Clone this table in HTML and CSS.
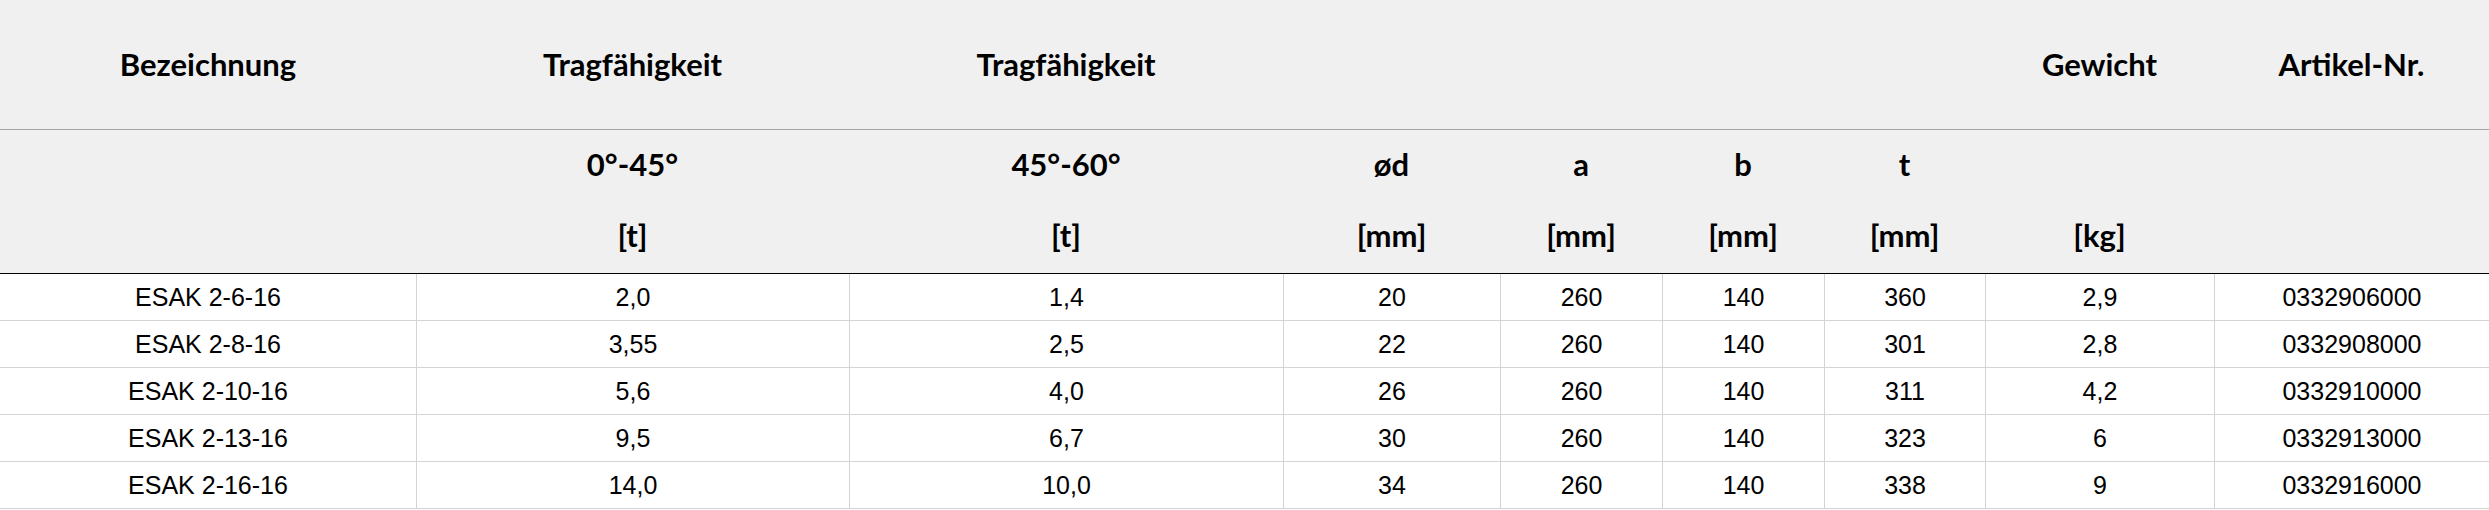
FILE: index.html
```html
<!DOCTYPE html>
<html lang="de">
<head>
<meta charset="utf-8">
<title>ESAK Spezifikation</title>
<link rel="stylesheet" href="styles.css">
</head>
<body>
<table class="spec">
  <colgroup>
    <col class="c1"><col class="c2"><col class="c3"><col class="c4"><col class="c5"><col class="c6"><col class="c7"><col class="c8"><col class="c9">
  </colgroup>
  <thead>
    <tr class="h1">
      <th>Bezeichnung</th>
      <th>Tragfähigkeit</th>
      <th>Tragfähigkeit</th>
      <th></th>
      <th></th>
      <th></th>
      <th></th>
      <th>Gewicht</th>
      <th>Artikel-Nr.</th>
    </tr>
    <tr class="h2">
      <th><span class="l1"></span><span class="l2"></span></th>
      <th><span class="l1">0°-45°</span><span class="l2">[t]</span></th>
      <th><span class="l1">45°-60°</span><span class="l2">[t]</span></th>
      <th><span class="l1">ød</span><span class="l2">[mm]</span></th>
      <th><span class="l1">a</span><span class="l2">[mm]</span></th>
      <th><span class="l1">b</span><span class="l2">[mm]</span></th>
      <th><span class="l1">t</span><span class="l2">[mm]</span></th>
      <th><span class="l1"></span><span class="l2">[kg]</span></th>
      <th><span class="l1"></span><span class="l2"></span></th>
    </tr>
  </thead>
  <tbody>
    <tr><td>ESAK 2-6-16</td><td>2,0</td><td>1,4</td><td>20</td><td>260</td><td>140</td><td>360</td><td>2,9</td><td>0332906000</td></tr>
    <tr><td>ESAK 2-8-16</td><td>3,55</td><td>2,5</td><td>22</td><td>260</td><td>140</td><td>301</td><td>2,8</td><td>0332908000</td></tr>
    <tr><td>ESAK 2-10-16</td><td>5,6</td><td>4,0</td><td>26</td><td>260</td><td>140</td><td>311</td><td>4,2</td><td>0332910000</td></tr>
    <tr><td>ESAK 2-13-16</td><td>9,5</td><td>6,7</td><td>30</td><td>260</td><td>140</td><td>323</td><td>6</td><td>0332913000</td></tr>
    <tr><td>ESAK 2-16-16</td><td>14,0</td><td>10,0</td><td>34</td><td>260</td><td>140</td><td>338</td><td>9</td><td>0332916000</td></tr>
  </tbody>
</table>
</body>
</html>
```
FILE: styles.css
```css
html, body {
  margin: 0;
  padding: 0;
  background: #ffffff;
}

.spec {
  width: 2489px;
  table-layout: fixed;
  border-collapse: separate;
  border-spacing: 0;
  color: #000000;
}

.c1 { width: 416px; }
.c2 { width: 433px; }
.c3 { width: 434px; }
.c4 { width: 217px; }
.c5 { width: 162px; }
.c6 { width: 162px; }
.c7 { width: 161px; }
.c8 { width: 229px; }
.c9 { width: 275px; }

.spec th {
  background: #f0f0f0;
  font-family: Lato, "Open Sans", sans-serif;
  font-weight: 700;
  font-size: 31px;
  text-align: center;
  padding: 0;
  vertical-align: top;
}

.h1 th {
  height: 129px;
  line-height: 129px;
  border-bottom: 1px solid #a6a6a6;
}

.h2 th {
  border-bottom: 1px solid #000000;
}

.h2 .l1,
.h2 .l2 {
  display: block;
}

.h2 .l1 {
  height: 68px;
  line-height: 68px;
}

.h2 .l2 {
  height: 75px;
  line-height: 75px;
}

.spec td {
  font-family: "Liberation Sans", Arial, sans-serif;
  font-size: 25px;
  text-align: center;
  padding: 0;
  height: 46px;
  line-height: 46px;
  border-bottom: 1px solid #d4d4d4;
}

.spec td + td {
  border-left: 1px solid #d4d4d4;
}
```
